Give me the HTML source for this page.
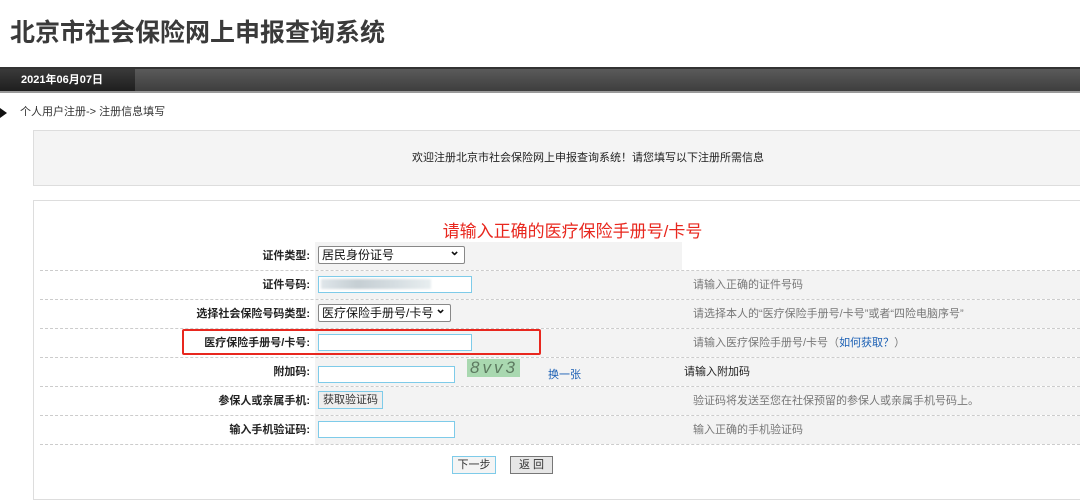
<!DOCTYPE html>
<html><head><meta charset="utf-8"><style>
*{margin:0;padding:0;box-sizing:border-box}
body{width:1080px;height:480px;overflow:hidden;background:#fff;font-family:"Liberation Sans","Noto Sans CJK SC",sans-serif;font-size:12px;color:#333;position:relative}
.a{position:absolute}
.title{left:10px;top:13px;font-size:25px;font-weight:bold;color:#3a3a3a;white-space:nowrap}
.bar{left:0;top:67px;width:1080px;height:26px;background:linear-gradient(#5a5a5a,#3e3e3e);border-top:2px solid #333;border-bottom:2px solid #999}
.tab{left:0;top:69px;width:135px;height:22px;background:linear-gradient(#3a3a3a,#1e1e1e);color:#fff;font-weight:bold;font-size:11px;line-height:22px;padding-left:21px}
.crumb{left:20px;top:103px;font-size:11px;color:#333}
.arrow{left:0;top:108px;width:0;height:0;border-left:7px solid #111;border-top:5px solid transparent;border-bottom:5px solid transparent}
.welcome{left:33px;top:130px;width:1060px;height:56px;background:#f4f4f4;border:1px solid #ddd;text-align:center;line-height:54px;font-size:11px;color:#222;padding-left:50px}
.form{left:33px;top:200px;width:1060px;height:300px;border:1px solid #ddd;background:#fff}
.red{left:0;width:1080px;top:217px;text-align:center;font-size:17px;color:#e8271e;padding-left:65px}
.row{left:40px;width:1040px;height:29px;border-bottom:1px dashed #ccc}
.lbl{position:absolute;right:calc(1040px - 270px);top:0;line-height:28px;text-align:right;white-space:nowrap;color:#222;font-size:11px;font-weight:bold}
.mid{position:absolute;left:275px;width:367px;top:0;height:28px;background:#f3f3f3}
.hint{position:absolute;left:642px;width:398px;top:0;height:28px;background:#f3f3f3;line-height:28px;padding-left:11px;color:#777;font-size:11px}
.inp{position:absolute;top:5px;height:17px;border:1px solid #7ecbe9;background:#fff}
.sel{position:absolute;top:4px;height:18px;border:1px solid #888;border-radius:2px;background:#fff;font-size:12px;line-height:16px;padding-left:3px;color:#111}
.sel:after{content:"⌄";position:absolute;right:4px;top:-4px;font-size:13px;font-weight:bold}
.btn{position:absolute;height:18px;font-size:11px;line-height:16px;text-align:center;background:#eee}
</style></head><body>
<div class="a title">北京市社会保险网上申报查询系统</div>
<div class="a bar"></div>
<div class="a tab">2021年06月07日</div>
<div class="a arrow"></div>
<div class="a crumb">个人用户注册-&gt; 注册信息填写</div>
<div class="a welcome">欢迎注册北京市社会保险网上申报查询系统！请您填写以下注册所需信息</div>
<div class="a form"></div>
<div class="a red">请输入正确的医疗保险手册号/卡号</div>

<div class="a row" style="top:242px"><div class="lbl">证件类型:</div><div class="mid"><div class="sel" style="left:3px;width:147px">居民身份证号</div></div></div>
<div class="a row" style="top:271px"><div class="lbl">证件号码:</div><div class="mid"><div class="inp" style="left:3px;width:154px"><div style="position:absolute;left:2px;top:2px;width:110px;height:10px;background:linear-gradient(90deg,#dfe6ea,#c5ced3,#d5dde1,#e8eef0);filter:blur(1px)"></div></div></div><div class="hint">请输入正确的证件号码</div></div>
<div class="a row" style="top:300px"><div class="lbl">选择社会保险号码类型:</div><div class="mid"><div class="sel" style="left:3px;width:133px">医疗保险手册号/卡号</div></div><div class="hint">请选择本人的“医疗保险手册号/卡号”或者“四险电脑序号”</div></div>
<div class="a row" style="top:329px"><div class="lbl">医疗保险手册号/卡号:</div><div class="mid"><div class="inp" style="left:3px;width:154px"></div></div><div class="hint">请输入医疗保险手册号/卡号（<span style="color:#1a5fb4">如何获取？</span>）</div></div>
<div class="a row" style="top:358px"><div class="lbl">附加码:</div><div class="mid"><div class="inp" style="left:3px;width:137px;top:8px"></div><div style="position:absolute;left:152px;top:1px;width:53px;height:18px;background:#a9d8b0;color:#5d7a60;font-style:italic;font-size:17px;line-height:18px;letter-spacing:3px;padding-left:3px">8vv3</div><div style="position:absolute;left:233px;top:8px;color:#1a5fb4;font-size:11px">换一张</div></div><div class="hint" style="padding-left:2px;color:#222">请输入附加码</div></div>
<div class="a row" style="top:387px"><div class="lbl">参保人或亲属手机:</div><div class="mid"><div class="btn" style="left:3px;top:4px;width:65px;border:1px solid #7ecbe9">获取验证码</div></div><div class="hint">验证码将发送至您在社保预留的参保人或亲属手机号码上。</div></div>
<div class="a row" style="top:416px"><div class="lbl">输入手机验证码:</div><div class="mid"><div class="inp" style="left:3px;width:137px"></div></div><div class="hint">输入正确的手机验证码</div></div>

<div class="a" style="left:182px;top:329px;width:359px;height:26px;border:2px solid #e8271e;border-radius:2px"></div>
<div class="btn a" style="left:452px;top:456px;width:44px;border:1px solid #7ecbe9;background:#f4f4f4">下一步</div>
<div class="btn a" style="left:510px;top:456px;width:43px;border:1px solid #777;background:#e6e6e6">返 回</div>
</body></html>
